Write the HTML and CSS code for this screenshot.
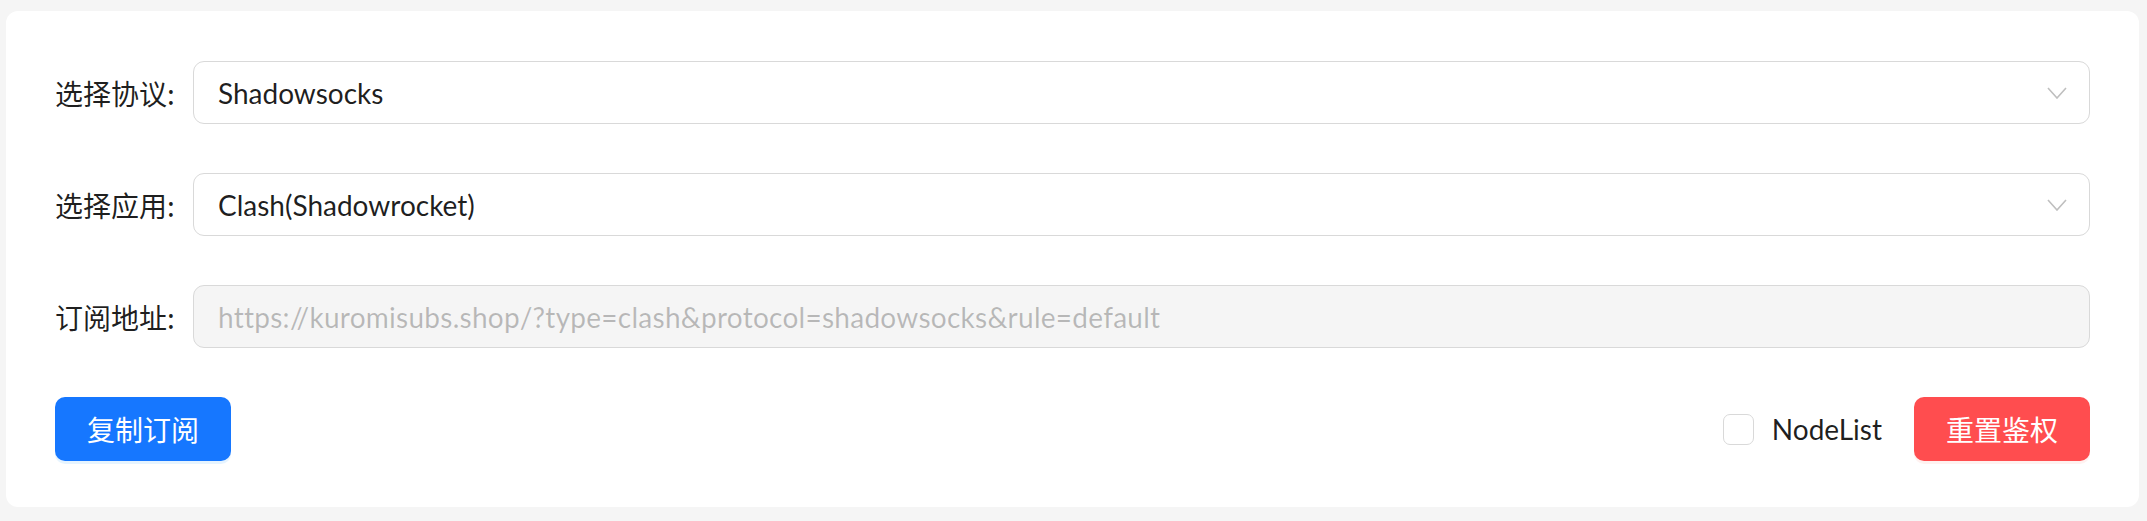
FILE: index.html
```html
<!DOCTYPE html>
<html lang="zh-CN">
<head>
<meta charset="utf-8">
<title>订阅</title>
<link rel="stylesheet" href="styles.css">
</head>
<body>
<div class="card">
  <div class="form">
    <div class="row">
      <label class="label">选择协议:</label>
      <div class="select">
        <span class="value">Shadowsocks</span>
        <svg class="chev" width="20" height="12" viewBox="0 0 20 12"><polyline points="1,1 10,11 19,1" fill="none" stroke="#bfbfbf" stroke-width="1.6"/></svg>
      </div>
    </div>
    <div class="row">
      <label class="label">选择应用:</label>
      <div class="select">
        <span class="value">Clash(Shadowrocket)</span>
        <svg class="chev" width="20" height="12" viewBox="0 0 20 12"><polyline points="1,1 10,11 19,1" fill="none" stroke="#bfbfbf" stroke-width="1.6"/></svg>
      </div>
    </div>
    <div class="row">
      <label class="label">订阅地址:</label>
      <div class="input disabled">
        <span class="value url">https://kuromisubs.shop/?type=clash&amp;protocol=shadowsocks&amp;rule=default</span>
      </div>
    </div>
  </div>
  <div class="actions">
    <button class="btn primary">复制订阅</button>
    <div class="right">
      <label class="check"><span class="box"></span><span class="check-text">NodeList</span></label>
      <button class="btn danger">重置鉴权</button>
    </div>
  </div>
</div>
</body>
</html>
```
FILE: styles.css
```css
* { box-sizing: border-box; }
html, body { margin: 0; padding: 0; }
body {
  background: #f5f5f5;
  font-family: "Lato", "Noto Sans CJK SC", sans-serif;
  font-size: 28px;
  color: rgba(0,0,0,0.88);
  padding: 11px 8px 14px 6px;
}
.card {
  background: #fff;
  border-radius: 12px;
  padding: 50px 49px 47px 49px;
  height: 496px;
}
.form {
  display: flex;
  flex-direction: column;
  gap: 49px;
}
.row {
  display: flex;
  align-items: center;
  height: 63px;
}
.label {
  width: 138px;
  flex: none;
  white-space: nowrap;
  font-family: "Noto Sans CJK SC", sans-serif;
}
.select, .input {
  flex: 1;
  height: 63px;
  border: 1.5px solid #d9d9d9;
  border-radius: 11px;
  display: flex;
  align-items: center;
  padding: 0 22px 0 24px;
}
.value { flex: 1; white-space: nowrap; }
.url { letter-spacing: 0.26px; }
.chev { flex: none; }
.input.disabled {
  background: #f5f5f5;
  color: rgba(0,0,0,0.25);
}
.actions {
  margin-top: 49px;
  display: flex;
  align-items: center;
  justify-content: space-between;
}
.right {
  display: flex;
  align-items: center;
  gap: 32px;
}
.btn {
  border: none;
  height: 64px;
  padding: 0 32px;
  border-radius: 10px;
  color: #fff;
  font-family: "Noto Sans CJK SC", sans-serif;
  font-size: 28px;
}
.primary {
  background: #1677ff;
  box-shadow: 0 3px 0 rgba(5,145,255,0.1);
}
.danger {
  background: #ff4d4f;
  box-shadow: 0 3px 0 rgba(255,38,5,0.06);
}
.check {
  display: flex;
  align-items: center;
  gap: 18px;
}
.box {
  width: 31px;
  height: 31px;
  border: 1.5px solid #d9d9d9;
  border-radius: 7px;
  background: #fff;
}
```
